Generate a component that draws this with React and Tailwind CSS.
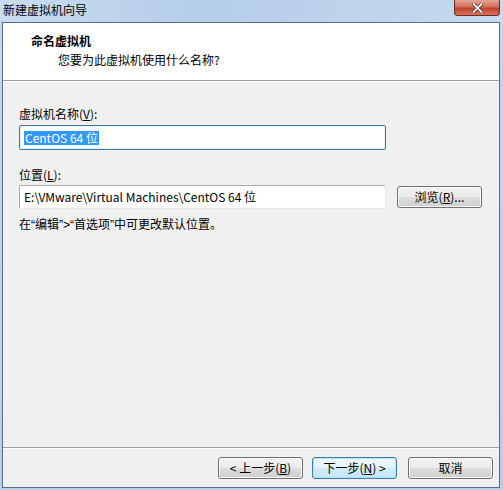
import React from "react";

const font = { fontFamily: '"Noto Sans CJK SC", "Noto Sans", sans-serif' };

function WinButton({ children, focused }) {
  return (
    <button
      className={
        focused
          ? "w-[85px] h-[22px] rounded-[3px] border border-[#3c7fb1] bg-[linear-gradient(#f0f9fe_0%,#e4f4fc_50%,#cfecfb_51%,#c4e6f9_100%)] shadow-[inset_0_0_0_1px_#b5e1f8] text-[12px] leading-[20px] text-black flex items-center justify-center"
          : "w-[85px] h-[22px] rounded-[3px] border border-[#707070] bg-[linear-gradient(#f2f2f2_0%,#ebebeb_50%,#dddddd_51%,#cfcfcf_100%)] shadow-[inset_0_0_0_1px_#fcfcfc] text-[12px] leading-[20px] text-black flex items-center justify-center"
      }
    >
      {children}
    </button>
  );
}

function Q({ children }) {
  return <span className="font-['Liberation_Sans',sans-serif]">{children}</span>;
}

export default function App() {
  return (
    <div
      className="w-[503px] h-[490px] flex flex-col bg-[linear-gradient(180deg,#c2d8f0_0%,#b7cfe9_100%)] overflow-hidden"
      style={font}
    >
      {/* title bar */}
      <div className="h-[22px] flex items-start justify-between bg-[linear-gradient(90deg,#c8dcf2_0%,#b6cde8_40%,#c6daf1_100%)]">
        <span className="pl-[3px] pt-[1px] text-[12px] leading-[18px] text-black">新建虚拟机向导</span>
        <div className="mr-[3px] w-[46px] h-[16px] rounded-b-[4px] border border-t-0 border-[#6e2a22] bg-[linear-gradient(#e8a493_0%,#d16e5b_45%,#c2412b_55%,#d8705a_100%)] flex items-center justify-center">
          <svg width="11" height="10" viewBox="0 0 11 10">
            <path d="M1.5 1 L9.5 9 M9.5 1 L1.5 9" stroke="#3a2a2a" strokeWidth="3.2" strokeLinecap="square" />
            <path d="M1.5 1 L9.5 9 M9.5 1 L1.5 9" stroke="#ffffff" strokeWidth="1.8" strokeLinecap="square" />
          </svg>
        </div>
      </div>

      {/* client area */}
      <div className="ml-[2px] mr-[3px] h-[466px] border border-[#5b6b80] bg-[#f0f0f0] flex flex-col">
        {/* header */}
        <div className="h-[57px] bg-white pl-[28px] pt-[10px]">
          <div className="text-[12px] leading-[16px] font-bold text-black">命名虚拟机</div>
          <div className="pl-[27px] mt-[3px] text-[12px] leading-[16px] text-black">您要为此虚拟机使用什么名称?</div>
        </div>
        <div className="h-[1px] bg-[#a0a0a0]" />
        <div className="h-[1px] bg-white" />

        {/* body */}
        <div className="flex-1 px-[16px] pt-[24px] text-[12px] text-black">
          <div className="leading-[16px]">
            虚拟机名称(<span className="underline">V</span>):
          </div>
          <div className="mt-[3px] w-[367px] h-[25px] border border-[#3d7bad] shadow-[inset_0_0_0_1px_#e3f0fa] bg-white rounded-[2px] pl-[4px] flex items-center">
            <span className="bg-[#3399ff] text-white leading-[14px] px-[1px]">CentOS 64 位</span>
          </div>

          <div className="mt-[17px] leading-[16px]">
            位置(<span className="underline">L</span>):
          </div>
          <div className="mt-[2px] flex items-center gap-[11px]">
            <div className="w-[367px] h-[24px] border border-[#abadb3] border-r-[#e3e9ef] border-b-[#e3e9ef] bg-white rounded-[2px] pl-[4px] flex items-center leading-[16px]">
              E:\VMware\Virtual Machines\CentOS 64 位
            </div>
            <WinButton>
              浏览(<span className="underline">R</span>)...
            </WinButton>
          </div>

          <div className="mt-[7px] leading-[16px]">
            在<Q>“</Q>编辑<Q>”&gt;“</Q>首选项<Q>”</Q>中可更改默认位置。
          </div>
        </div>

        {/* footer */}
        <div className="h-[1px] bg-[#a0a0a0]" />
        <div className="h-[1px] bg-white" />
        <div className="h-[38px] flex items-start justify-end pr-[6px] pt-[8px]">
          <WinButton>
            &lt; 上一步(<span className="underline">B</span>)
          </WinButton>
          <div className="w-[9px]" />
          <WinButton focused>
            下一步(<span className="underline">N</span>) &gt;
          </WinButton>
          <div className="w-[11px]" />
          <WinButton>取消</WinButton>
        </div>
      </div>
    </div>
  );
}
